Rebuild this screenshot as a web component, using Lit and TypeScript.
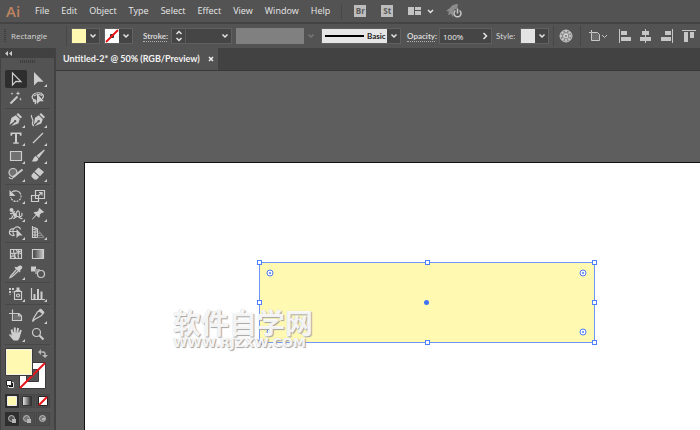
import { LitElement, html, css, svg, nothing } from "lit";
import { customElement } from "lit/decorators.js";
import { classMap } from "lit/directives/class-map.js";

const MENUS = ["File", "Edit", "Object", "Type", "Select", "Effect", "View", "Window", "Help"];

interface Tool {
  name: string;
  art: unknown;
  more?: boolean;
  active?: boolean;
}

// Every tool glyph is drawn in a 22 x 18 box, centred on (11, 9).
const TOOL_GROUPS: Tool[][] = [
  [
    { name: "Selection", active: true, art: svg`<path class="l" d="M7.500 3v12l3.400-3.600 5 .1z"/>` },
    { name: "Direct Selection", more: true, art: svg`<path d="M7 2v13.500l3.800-3.800h5.800z"/>` },
    {
      name: "Magic Wand",
      art: svg`<path class="t" d="M5.500 14.500l7-7"/><path d="M13 2l.6 1.800 1.800.6-1.800.6L13 6.800l-.6-1.800-1.800-.6 1.800-.6zM7 3l.4 1.200 1.200.4-1.200.4L7 6.200 6.600 5l-1.200-.4 1.200-.4zM15.500 8.500l.4 1.200 1.200.4-1.200.4-.4 1.200-.4-1.200-1.200-.4 1.200-.4z"/>`,
    },
    {
      name: "Lasso",
      art: svg`<path class="l" d="M9 11.500C5 11 4.500 8 6 5.800c2-2.500 8-3 10 0 .8 1.500.2 3-1 4M7 7c2-1.500 5-2 8-.5M8.500 11c-1.500-1-2.500 0-2 1s2.500.5 2-1c1 2 .5 3-.7 4"/><path d="M10 4.500v10.500l2.800-2.800h4z"/>`,
    },
  ],
  [
    {
      name: "Pen",
      more: true,
      art: svg`<path d="M13 2l4 4-1.500 1.500-4-4zM10.800 4.200l4 4-1.500 4.300-7 2.500 3.500-3.700a1.200 1.200 0 1 0-.8-.8L4.500 14l2-7.300z"/>`,
    },
    {
      name: "Curvature",
      more: true,
      art: svg`<path d="M14 2l4 4-1.500 1.500-4-4zM11.800 4.200l4 4-1.500 4.300-6.500 2.500 3.500-3.700a1.200 1.200 0 1 0-.8-.8L6.800 13.500l1.200-6.800z"/><path class="l" d="M4.500 4c-1 3 2.500 4 1.200 7-.5 1.500-.7 3 1.300 4"/>`,
    },
    {
      name: "Type",
      more: true,
      art: svg`<path d="M5.500 3.500h11v3.200h-1.500L14.500 5H12v8.200l1.800.4v1.100H8.200v-1.100l1.800-.4V5H7.500L7 6.700H5.500z"/>`,
    },
    { name: "Line Segment", more: true, art: svg`<path class="l" d="M6 14L16 4"/>` },
    { name: "Rectangle", more: true, art: svg`<path class="l dim" d="M5.500 4.500h11v9h-11z"/>` },
    {
      name: "Paintbrush",
      more: true,
      art: svg`<path d="M17 2.500l.8.8-6 7.700-2.300-2.300zM8.800 9l2.500 2.500c-.3 3.500-4 3.500-6.800 2.500 2-.5 1.500-4 4.300-5z"/>`,
    },
    {
      name: "Shaper",
      more: true,
      art: svg`<circle class="l dim" cx="8" cy="7.500" r="4"/><path class="t" d="M17.500 4.500l-8 6.500"/><path d="M8.500 10l2 2-3.500 1.500z"/><path class="l" d="M4 12c1 2 2.500 2 4 1.500"/>`,
    },
    {
      name: "Eraser",
      more: true,
      art: svg`<path d="M11.500 2.500l5.500 4.500-4 4.200-5.500-4.700zM6.800 7.300l5.300 4.600-2.300 2.600H7.300L4.500 11.800V10z"/>`,
    },
  ],
  [
    {
      name: "Rotate",
      more: true,
      art: svg`<path class="l" d="M7 5c3-2.200 7.500-1.200 8.800 2.500"/><path class="l dots" d="M16 8.500a5 5 0 0 1-10.200 1.500"/><path d="M4.500 3v6h6z"/>`,
    },
    {
      name: "Scale",
      more: true,
      art: svg`<path class="l" d="M8.500 3.500h9v8h-9zM4.500 8.500h7v6h-7zM11 9l4-3.500M12 5.500h3v3"/>`,
    },
    {
      name: "Width",
      more: true,
      art: svg`<path class="l" d="M4 14c3.500-.5 4-2 3-3.500M5.500 4l4 5c2 1.500 2-4 4-3s0 5 1.500 5.500 3-2 1.500-3.500M5 8.500c2 .5 4-.5 4.500-2.500M8 13.500c2.500 0 3-3 5-2s1.500 2.500 4.500 2"/><circle cx="6.500" cy="5" r="2"/><circle cx="10" cy="10" r="2"/>`,
    },
    {
      name: "Puppet Warp",
      more: true,
      art: svg`<path d="M12.500 3l4.500 4-1.500 1-.8-.3-2 2c.3 1.500 0 2.300-.8 3L9.400 10.500 5.500 14.500l-.5-.5 3.800-4.300-2.200-2c.8-.9 2-1 3.200-.8l2-2-.2-.8z"/>`,
    },
    {
      name: "Shape Builder",
      more: true,
      art: svg`<path class="l" d="M9.500 12.500C6 13 4 11 4.500 8.500S8 5.500 9 5.500c2-2.500 6-2 6.500 1M5 8.500h8M9 5.500c-1.500 1.500-1.500 4.500.500 7"/><path d="M11.500 6v9l2.500-2.500h3.500z"/>`,
    },
    {
      name: "Perspective Grid",
      more: true,
      art: svg`<path class="l" d="M5.500 3v12M5.500 3.500l5 2.500v8.500M5.500 14.500h5M5.500 9h5M8 4.500v10M5.500 6l5 1.500M5.500 12h5"/><path class="l low" d="M12 8.500l5 6M11 10.500h2.500M11 12.500h4.500M11 14.500h6"/>`,
    },
  ],
  [
    {
      name: "Mesh",
      art: svg`<path class="l" d="M5.500 4.500h11v9h-11zM6 8c4 3 7-3 10 1M9 4.500c-2 3 3 5 0 9M13 4.500c3 3-2 5 1 9M6 12c2-2 4-1 5 1.500M11 5c1 2 3 2 5 1"/>`,
    },
    {
      name: "Gradient",
      art: svg`<defs><linearGradient id="g"><stop stop-color="#3a3a3a"/><stop offset="1" stop-color="#ccc"/></linearGradient></defs><path class="l grad" d="M5.500 4.500h11v9h-11z"/>`,
    },
    {
      name: "Eyedropper",
      more: true,
      art: svg`<path d="M14.500 2.500c2-.500 3.500 1 2.500 3L15 7.500l.5 1-1 1L9.500 4.700l1-1 1.300.5z"/><path class="l" d="M11.500 6.500l-5.500 6-1 2 2-.8 6-5.500"/>`,
    },
    {
      name: "Blend",
      art: svg`<path d="M4 3.500h5v5H4z"/><path class="fillmid" d="M8 6h5v5H8z"/><circle class="l bg" cx="14" cy="11" r="3.500"/>`,
    },
  ],
  [
    {
      name: "Symbol Sprayer",
      more: true,
      art: svg`<path d="M4 3h2v2H4zM7 3h2v2H7zM4 6h2v2H4zM7.500 6.500h1v1h-1zM4.500 9h1v1h-1zM10.500 5h5v1h-5zM11.500 2.500h3V5h-3z"/><path class="l" d="M9.500 6.500h7v8h-7z"/><circle class="l" cx="13" cy="10.500" r="1.500"/>`,
    },
    {
      name: "Column Graph",
      more: true,
      art: svg`<path class="l" d="M4.500 3v11.500H18"/><path d="M6.500 9h2v5h-2zM10 4h2v10h-2zM13.500 6.500h2V14h-2z"/>`,
    },
  ],
  [
    { name: "Artboard", art: svg`<path class="l" d="M7.500 2.500v11h9V9L14 6.500H4M13.500 6.500V9H16"/><path class="dimfill" d="M8.500 7.500h4.500V10h3v3H8.500z"/>` },
    {
      name: "Slice",
      more: true,
      art: svg`<path class="l" d="M14 2.500l2.500 2.500-2 3.500-7 4-2 2 1-3 4-6.500z"/><path d="M13 1.500l4.500 4-1.500 2-4.500-3.500z"/>`,
    },
    {
      name: "Hand",
      more: true,
      art: svg`<path class="t" d="M7.500 8L6.500 4.500M9.800 7.500V2.500M12.300 7.500l.8-4.500M14.500 9l1.500-4"/><path d="M6.300 7l9.500.5c-.5 3-1 6-2.800 8H8.500C7 13.500 5 11.500 3.800 9.800c.6-1 1.800-.5 2.800.7z"/>`,
    },
    { name: "Zoom", art: svg`<circle class="l" cx="9.500" cy="7.500" r="4"/><path class="t" d="M12.500 10.500l4 4"/>` },
  ],
];

const chevron = html`<svg class="chev" width="8" height="6" viewBox="0 0 8 6" aria-hidden="true"><path d="M1.500 1.500L4 4l2.500-2.500" /></svg>`;

@customElement("ai-toolbox")
class AiToolbox extends LitElement {
  static styles = css`
    :host { display: flex; flex-direction: column; background: #535353; border-left: 1px solid #434343; box-sizing: border-box; }
    .head { height: 10px; background: #414141; display: flex; align-items: center; padding-left: 4px; }
    .head svg { display: block; }
    .grip { height: 3px; width: 15px; margin: 2px auto 5px; background: repeating-linear-gradient(90deg, #3e3e3e 0 1px, #515151 1px 2px); }
    .group { display: grid; grid-template-columns: 22px 22px; margin: 0 4px; padding: 2px 0 1px; border-bottom: 1px solid #474747; }
    .group:nth-of-type(3) { row-gap: 1px; }
    .tool { height: 18px; padding: 0; border: 0; background: none; border-radius: 2px; }
    .tool.active { background: #2e2e2e; }
    svg { display: block; overflow: visible; }
    .tool path, .tool circle { fill: #cdcdcd; }
    .tool .l { fill: none; stroke: #cdcdcd; stroke-width: 1.2; }
    .tool .t { fill: none; stroke: #cdcdcd; stroke-width: 2; }
    .tool .dim, .tool .dimfill { fill: #727272; }
    .tool .low { stroke: #8a8a8a; }
    .tool .bg { fill: #535353; }
    .tool .fillmid { fill: #999; }
    .tool .dots { stroke-dasharray: 2 1; }
    .tool .grad { fill: url(#g); }
    .paint { padding: 3px 4px 0; }
    .row { display: flex; gap: 1px; padding: 4px 4px 0; }
    .row button { width: 15px; height: 14px; padding: 0; border: 1px solid #464646; background: #4d4d4d; display: grid; place-items: center; }
    .row button.on { background: #2e2e2e; border-color: #2e2e2e; }
  `;

  render() {
    return html`
      <div class="head"><svg width="7" height="5" viewBox="0 0 7 5"><path fill="#ccc" d="M3 0v5L0 2.500zM7 0v5L4 2.500z" /></svg></div>
      <div class="grip"></div>
      ${TOOL_GROUPS.map(
        (group) => html`<div class="group">
          ${group.map(
            (t) => html`<button class=${classMap({ tool: true, active: !!t.active })} aria-label=${t.name}>
              <svg width="22" height="18" viewBox="0 0 22 18">${t.art}${t.more ? svg`<path d="M20 14v3h-3z"/>` : nothing}</svg>
            </button>`
          )}
        </div>`
      )}
      <div class="paint">
        <svg width="44" height="42" viewBox="0 0 44 42" role="img" aria-label="Fill and stroke">
          <path fill="#fff" stroke="#3b3b3b" d="M14.500 14.500h26v26h-26z" />
          <path fill="#535353" stroke="#3b3b3b" d="M21.500 21.500h12v12h-12z" />
          <path stroke="#e8151b" stroke-width="2" d="M15 40L40 15" />
          <path fill="#fff9b2" stroke="#3b3b3b" d="M.5.5h27v27H.5z" />
          <path fill="none" stroke="#f4f4e6" d="M1.500 1.500h25v25h-25z" />
          <path fill="none" stroke="#b5b5b5" stroke-width="1.500" d="M35 4h3c2 0 2 1 2 4" />
          <path fill="#b5b5b5" d="M36 1v6l-3-3zM37 7h6l-3 3z" />
          <path fill="#111" stroke="#ddd" d="M3.500 34.500h5v5h-5z" />
          <path fill="#fff" stroke="#222" d="M1.500 32.500h5v5h-5z" />
        </svg>
      </div>
      <div class="row">
        <button class="on" aria-label="Color">
          <svg width="10" height="10" viewBox="0 0 10 10"><path fill="#fff9b2" stroke="#eee" d="M.5.5h9v9h-9z" /></svg>
        </button>
        <button aria-label="Gradient">
          <svg width="10" height="10" viewBox="0 0 10 10">
            <defs><linearGradient id="bw"><stop stop-color="#eee" /><stop offset="1" stop-color="#222" /></linearGradient></defs>
            <path fill="url(#bw)" stroke="#333" d="M.5.5h9v9h-9z" />
          </svg>
        </button>
        <button aria-label="None">
          <svg width="10" height="10" viewBox="0 0 10 10"><path fill="#fff" stroke="#222" d="M.5.5h9v9h-9z" /><path stroke="#e8151b" stroke-width="2" d="M1 9L9 1" /></svg>
        </button>
      </div>
      <div class="row">
        ${["Draw Normal", "Draw Behind", "Draw Inside"].map(
          (n, i) => html`<button class=${i ? "" : "on"} aria-label=${n}>
            <svg width="10" height="10" viewBox="0 0 10 10">
              <circle cx="4.500" cy="4.500" r="3" fill=${i ? "#777" : "#555"} stroke="#bbb" />
              ${i < 2 ? svg`<path fill="#b5b5b5" d="M5 5h4v4H5z"/>` : svg`<path fill="#b5b5b5" d="M4 4h3v2H4z"/>`}
            </svg>
          </button>`
        )}
      </div>
    `;
  }
}

@customElement("ai-control-bar")
class AiControlBar extends LitElement {
  static styles = css`
    :host { display: flex; align-items: center; height: 26px; background: #535353; border-top: 2px solid #444; box-sizing: border-box; overflow: hidden; color: #d6d6d6; font-size: 8px; padding-left: 4px; }
    :host > * { flex: none; }
    button, input, select { font: inherit; color: inherit; margin: 0; padding: 0; border: 0; border-radius: 0; background: none; box-sizing: border-box; }
    .grip { width: 2px; height: 14px; background: repeating-linear-gradient(#3e3e3e 0 1px, #515151 1px 2px); }
    .kind { width: 55px; margin-left: 5px; padding-bottom: 2px; }
    .sep { width: 1px; height: 20px; background: #474747; margin-right: 4px; }
    .box { display: flex; align-items: center; height: 16px; border: 1px solid #606060; background: #454545; box-sizing: border-box; margin-right: 4px; }
    .box svg { display: block; }
    .fill { width: 14px; height: 14px; background: #fff9b2; }
    .grey { background: #e4e4e4; }
    .drop { width: 13px; height: 14px; display: grid; place-items: center; }
    .chev path { fill: none; stroke: #e4e4e4; stroke-width: 1.5; }
    .lbl { font: 700 8px/10px Lato, sans-serif; border-bottom: 1px dotted #b0b0b0; margin-right: 4px; }
    .stroke { margin-left: 6px; width: 24px; }
    .opacity { margin-left: 2px; width: 28px; }
    .plain { border: 0; font-weight: 400; width: 20px; }
    .num { width: 33px; height: 14px; border-left: 1px solid #5a5a5a; }
    .pct { width: 38px; padding-left: 3px; border: 0; color: #eee; }
    .off { width: 68px; height: 16px; background: #808080; }
    .offdrop { margin-right: 4px; }
    .offdrop .chev path { stroke: #777; }
    .brush { display: flex; align-items: center; width: 65px; height: 14px; background: #e6e6e6; }
    .brush i { flex: 1; height: 2px; margin: 0 3px; background: #000; }
    .brush select { appearance: none; width: 20px; color: #222; font: 700 8px/12px Lato, sans-serif; }
    .globe { margin-right: 6px; }
    .icons { display: flex; align-items: center; gap: 9px; }
    .icons svg, .globe svg { display: block; }
  `;

  render() {
    return html`
      <span class="grip"></span>
      <span class="kind">Rectangle</span>
      <span class="sep"></span>
      <div class="box"><span class="fill"></span><button class="drop" aria-label="Fill">${chevron}</button></div>
      <div class="box">
        <svg width="14" height="14" viewBox="0 0 14 14">
          <path fill="#fff" d="M0 0h14v14H0z" /><path fill="#aaa" stroke="#333" d="M5.500 5.500h3v3h-3z" />
          <path stroke="#e8151b" stroke-width="2" d="M1 13L13 1" />
        </svg>
        <button class="drop" aria-label="Stroke color">${chevron}</button>
      </div>
      <label class="lbl stroke" for="weight">Stroke:</label>
      <div class="box">
        <button class="drop" aria-label="Step weight">
          <svg class="chev" width="8" height="12" viewBox="0 0 8 12"><path d="M1.500 4L4 1.500 6.500 4M1.500 8L4 10.500 6.500 8" /></svg>
        </button>
        <input class="num" id="weight" />
        <button class="drop" aria-label="Weight list">${chevron}</button>
      </div>
      <span class="off"></span>
      <button class="drop offdrop" aria-label="Width profile" disabled>${chevron}</button>
      <div class="box">
        <div class="brush"><i></i><select aria-label="Brush"><option>Basic</option></select></div>
        <button class="drop" aria-label="Brush list">${chevron}</button>
      </div>
      <label class="lbl opacity" for="opacity">Opacity:</label>
      <div class="box">
        <input class="num pct" id="opacity" value="100%" />
        <button class="drop" aria-label="Opacity slider">
          <svg class="chev" width="6" height="8" viewBox="0 0 6 8"><path d="M1.500 1l3 3-3 3" /></svg>
        </button>
      </div>
      <span class="lbl plain">Style:</span>
      <div class="box"><span class="fill grey"></span><button class="drop" aria-label="Graphic style">${chevron}</button></div>
      <span class="sep"></span>
      <button class="globe" aria-label="Recolor artwork">
        <svg width="16" height="16" viewBox="0 0 16 16">
          <circle cx="8" cy="8" r="6" fill="#8d8d8d" stroke="#c4c4c4" />
          <path stroke="#d0d0d0" stroke-width="1.500" stroke-dasharray="2 1" d="M8 2v12M2 8h12M4 4l8 8M12 4l-8 8" /><circle cx="8" cy="8" r="1" fill="#777" />
        </svg>
      </button>
      <span class="sep"></span>
      <div class="icons">
        <button aria-label="Shape properties">
          <svg width="25" height="14" viewBox="0 0 25 14">
            <path fill="#6b6b6b" stroke="#c8c8c8" d="M6.500 3.500h6l2 2v6h-8z" /><path fill="none" stroke="#c8c8c8" d="M4 3.500h2M6.500 1v2M17 6l2.500 2.500L22 6" />
          </svg>
        </button>
        <button aria-label="Align left">
          <svg width="12" height="14" viewBox="0 0 12 14"><path fill="#c6c6c6" d="M0 0h1v14H0zM2 2h6v4H2zM2 8h10v4H2z" /></svg>
        </button>
        <button aria-label="Align center">
          <svg width="12" height="14" viewBox="0 0 12 14"><path fill="#c6c6c6" d="M5 0h1v14H5zM2 2h7v4H2zM0 8h11v4H0z" /></svg>
        </button>
        <button aria-label="Align right">
          <svg width="12" height="14" viewBox="0 0 12 14"><path fill="#c6c6c6" d="M11 0h1v14h-1zM4 2h6v4H4zM0 8h10v4H0z" /></svg>
        </button>
        <button aria-label="Align top">
          <svg width="14" height="14" viewBox="0 0 14 14"><path fill="#c6c6c6" d="M0 1h14v1H0zM2 3h4v10H2zM8 3h4v6H8z" /></svg>
        </button>
      </div>
    `;
  }
}

@customElement("ai-document")
class AiDocument extends LitElement {
  static styles = css`
    :host { display: flex; flex-direction: column; flex: 1; min-width: 0; background: #424242; }
    .tabs { display: flex; height: 23px; box-sizing: border-box; border-bottom: 1px solid #383838; }
    .tab { display: flex; align-items: center; justify-content: space-between; gap: 8px; min-width: 160px; padding: 0 4px 0 7px; background: #535353; color: #f2f2f2; font: 700 9px/12px Lato, sans-serif; box-sizing: border-box; white-space: nowrap; }
    .tab button { border: 0; padding: 0; background: none; }
    .tab svg { display: block; }
    .canvas { flex: 1; display: flex; background: #5e5e5e; padding: 91px 0 0 28px; overflow: hidden; }
    .artboard { flex: 1; position: relative; background: #fff; border: solid #111; border-width: 1px 0 0 1px; }
    .shape { position: absolute; left: 170px; top: 95px; }
    .mark { position: absolute; left: 88px; top: 143px; color: #ffffffe0; text-shadow: 1px 1px 1px #a4a4a4, 0 0 1px #ccc; white-space: nowrap; }
    .cjk { font: 700 28px/32px "Noto Sans CJK SC", sans-serif; }
    .url { font: 700 13px/10px "DejaVu Sans", sans-serif; }
  `;

  render() {
    const handles = [[4, 4], [172, 4], [339, 4], [4, 44], [339, 44], [4, 84], [172, 84], [339, 84]];
    const corners = [[15, 15], [328, 15], [15, 74], [328, 74]];
    return html`
      <div class="tabs">
        <div class="tab">
          <span>Untitled-2* @ 50% (RGB/Preview)</span>
          <button aria-label="Close"><svg width="6" height="6" viewBox="0 0 6 6"><path stroke="#eee" stroke-width="1.500" d="M1 1l4 4M5 1L1 5" /></svg></button>
        </div>
      </div>
      <div class="canvas">
        <div class="artboard">
          <svg class="shape" width="344" height="89" viewBox="0 0 344 89" role="img" aria-label="Selected rectangle">
            <path fill="#fff9b2" stroke="#6d95f3" d="M4.500 4.500h335v80H4.500z" />
            ${corners.map(([x, y]) => svg`<circle cx=${x} cy=${y} r="3" fill="#fff" stroke="#4a7bf0"/><circle cx=${x} cy=${y} r="1" fill="#4a7bf0"/>`)}
            ${handles.map(([x, y]) => svg`<rect x=${x - 1.5} y=${y - 1.5} width="4" height="4" fill="#fff" stroke="#4f80ff"/>`)}
            <circle cx="171.500" cy="44.500" r="2.500" fill="#3f72f5" />
          </svg>
          <div class="mark"><div class="cjk">软件自学网</div><div class="url">WWW.RJZXW.COM</div></div>
        </div>
      </div>
    `;
  }
}

@customElement("app-root")
class AppRoot extends LitElement {
  static styles = css`
    :host { display: flex; flex-direction: column; min-height: 100vh; background: #424242; font-family: "Open Sans", "Noto Sans", sans-serif; color: #dcdcdc; }
    .menubar { display: flex; align-items: center; height: 22px; background: #535353; padding-left: 6px; overflow: hidden; }
    .logo { width: 29px; font-size: 15px; line-height: 20px; font-weight: 600; color: #bf8460; }
    nav { display: flex; gap: 12px; }
    nav button { font: 9px/14px "Open Sans", sans-serif; color: #e8e8e8; background: none; border: 0; padding: 0; }
    .div { width: 1px; height: 15px; margin: 0 12px 0 11px; background: #474747; }
    .sq { width: 12px; height: 12px; margin-right: 15px; padding: 0; border: 0; background: #bdbdbd; color: #5a5a5a; font: 700 8px/12px "Open Sans", sans-serif; }
    .ic { padding: 0; border: 0; background: none; margin-right: 12px; }
    .ic svg { display: block; }
    .work { flex: 1; display: flex; gap: 2px; }
    ai-toolbox { width: 54px; flex: none; }
  `;

  render() {
    return html`
      <header class="menubar">
        <span class="logo">Ai</span>
        <nav>${MENUS.map((m) => html`<button>${m}</button>`)}</nav>
        <span class="div"></span>
        <button class="sq">Br</button>
        <button class="sq">St</button>
        <button class="ic" aria-label="Arrange documents">
          <svg width="26" height="10" viewBox="0 0 26 10"><path fill="#c4c4c4" d="M0 1h6v8H0zM7 1h6v3H7zM7 5h6v4H7z" /><path fill="none" stroke="#e4e4e4" stroke-width="1.500" d="M20 4l2.500 2.500L25 4" /></svg>
        </button>
        <button class="ic" aria-label="GPU performance">
          <svg width="17" height="16" viewBox="0 0 17 16">
            <path fill="#8c8c8c" d="M12 1c-4 0-6 1-8 4L0 8l3 .5-1 3.500 3-1 2 3 1-4 3-3z" />
            <circle cx="11.500" cy="10" r="4.500" fill="#535353" />
            <path fill="none" stroke="#c8c8c8" stroke-width="1.500" d="M9.500 7.500a3.500 3.500 0 1 0 4 0M11.500 5.500v5" />
          </svg>
        </button>
      </header>
      <ai-control-bar></ai-control-bar>
      <main class="work"><ai-toolbox></ai-toolbox><ai-document></ai-document></main>
    `;
  }
}
